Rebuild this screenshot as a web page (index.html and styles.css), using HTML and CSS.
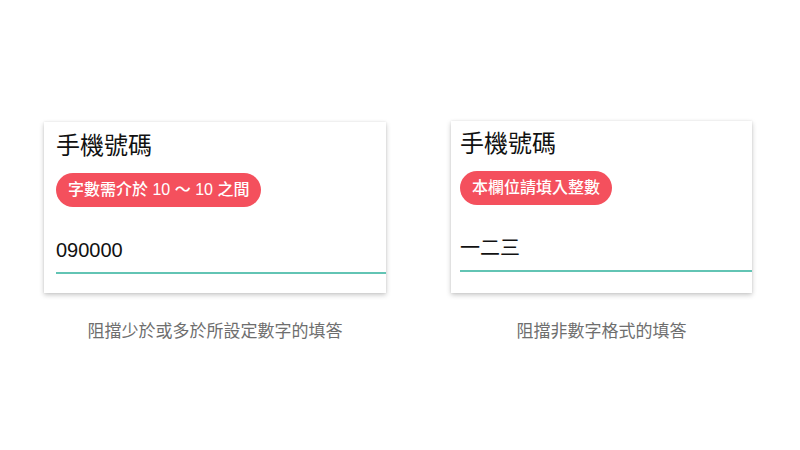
FILE: index.html
```html
<!DOCTYPE html>
<html lang="zh-Hant">
<head>
<meta charset="utf-8">
<title>驗證示例</title>
<link rel="stylesheet" href="styles.css">
</head>
<body>
<main class="demo">
  <section class="col col-a">
    <div class="card">
      <div class="title">手機號碼</div>
      <div class="badge">字數需介於 10 ～ 10 之間</div>
      <div class="field">090000</div>
    </div>
    <p class="caption">阻擋少於或多於所設定數字的填答</p>
  </section>
  <section class="col col-b">
    <div class="card card-b">
      <div class="title">手機號碼</div>
      <div class="badge">本欄位請填入整數</div>
      <div class="field">一二三</div>
    </div>
    <p class="caption">阻擋非數字格式的填答</p>
  </section>
</main>
</body>
</html>
```
FILE: styles.css
```css
html, body {
  margin: 0;
  padding: 0;
  background: #ffffff;
}
body {
  width: 800px;
  height: 450px;
  overflow: hidden;
  font-family: "Liberation Sans", "Noto Sans CJK TC", sans-serif;
  color: #111;
}
.demo {
  display: flex;
  align-items: flex-start;
  gap: 65px;
  padding: 122px 0 0 44px;
}
.col {
  display: flex;
  flex-direction: column;
}
.col-a { width: 342px; }
.col-b { width: 301px; margin-top: -1px; }
.card {
  background: #fff;
  box-shadow: 0 2px 5px rgba(0, 0, 0, 0.22), 0 0 2px rgba(0, 0, 0, 0.08);
  padding: 8px 0 19px 12px;
  display: flex;
  flex-direction: column;
  align-items: flex-start;
}
.card-b {
  padding-top: 7px;
  padding-bottom: 21px;
  padding-left: 9px;
}
.title {
  font-size: 24px;
  line-height: 32px;
  color: #111;
}
.badge {
  margin-top: 11px;
  background: #f4505d;
  color: #fff;
  font-size: 16px;
  font-weight: 500;
  line-height: 22px;
  padding: 6px 12px;
  border-radius: 17px;
}
.field {
  align-self: stretch;
  margin-top: 28px;
  font-size: 20px;
  line-height: 30px;
  padding-bottom: 7px;
  border-bottom: 2px solid #62c4b4;
  color: #111;
}
.caption {
  margin: 25px 0 0;
  text-align: center;
  font-size: 17px;
  line-height: 24px;
  color: #6e6e6e;
  font-family: "Noto Sans CJK TC", sans-serif;
}
```
